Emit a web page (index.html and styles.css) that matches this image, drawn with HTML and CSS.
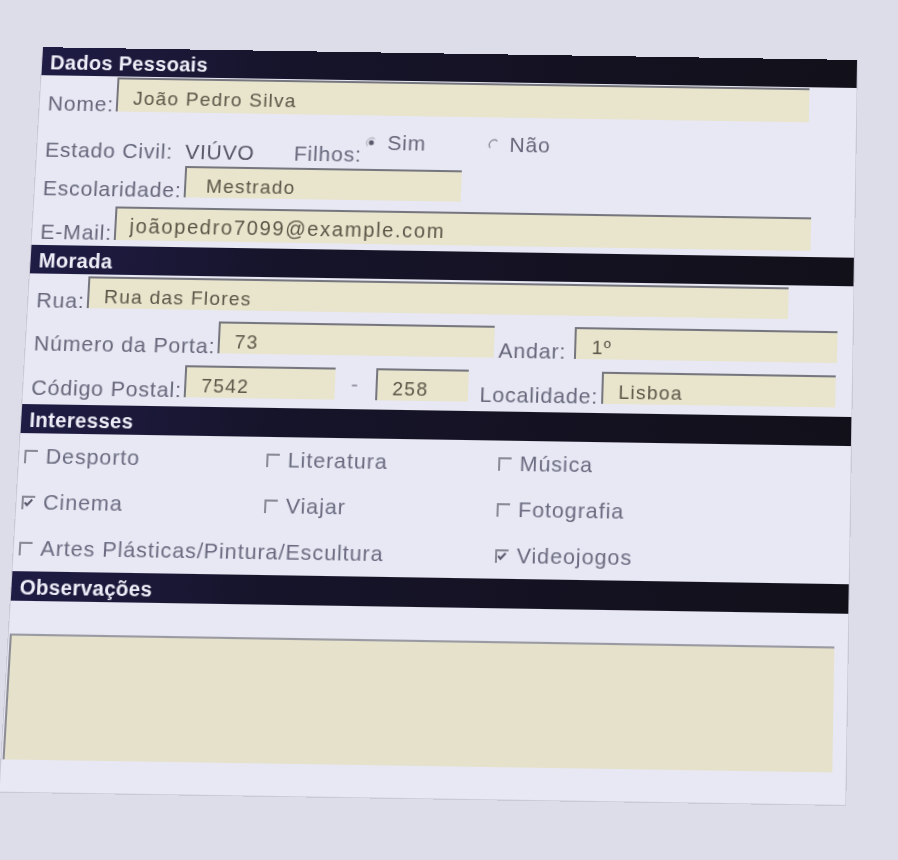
FILE: index.html
```html
<!DOCTYPE html>
<html lang="pt">
<head>
    <meta charset="UTF-8">
    <meta name="viewport" content="width=device-width, initial-scale=1.0">
    <title>Ficha de Inscrição</title>
    <link rel="stylesheet" href="styles.css">
</head>
<body>

<form class="ficha" id="ficha">
    <!-- Dados pessoais -->
    <div class="barra barra-topo"><span>Dados Pessoais</span></div>

    <div class="linha l-nome">
        <label for="nome">Nome:</label>
        <input class="campo c-nome" id="nome" type="text" value="João Pedro Silva">
    </div>

    <div class="linha l-estado">
        <span class="rotulo">Estado Civil:</span>
        <span class="valor">VIÚVO</span>
        <span class="rotulo filhos">Filhos:</span>
        <span class="opcoes">
            <svg class="radio" width="12" height="12" viewBox="0 0 12 12"><path d="M9.4 2.4A5 5 0 0 0 2.4 9.4" fill="none" stroke="#b4b4c0" stroke-width="1.2"/><circle cx="6" cy="6" r="2.5" fill="#5a5a6c"/></svg>
            <span class="op-sim">Sim</span>
            <svg class="radio" width="12" height="12" viewBox="0 0 12 12"><path d="M9.4 2.4A5 5 0 0 0 2.4 9.4" fill="none" stroke="#8c8c99" stroke-width="1.3"/></svg>
            <span>Não</span>
        </span>
    </div>

    <div class="linha l-escola">
        <label for="escola">Escolaridade:</label>
        <input class="campo c-escola" id="escola" type="text" value="Mestrado">
    </div>

    <div class="linha l-email">
        <label for="email">E-Mail:</label>
        <input class="campo c-email" id="email" type="text" value="joãopedro7099@example.com">
    </div>

    <!-- Morada -->
    <div class="barra barra-morada"><span>Morada</span></div>

    <div class="linha l-rua">
        <label for="rua">Rua:</label>
        <input class="campo c-rua" id="rua" type="text" value="Rua das Flores">
    </div>

    <div class="linha l-porta">
        <label for="porta">Número da Porta:</label>
        <input class="campo c-porta" id="porta" type="text" value="73">
        <label class="andar" for="andar">Andar:</label>
        <input class="campo c-andar" id="andar" type="text" value="1º">
    </div>

    <div class="linha l-postal">
        <label for="cp1">Código Postal:</label>
        <input class="campo c-cp1" id="cp1" type="text" value="7542">
        <span class="traco">-</span>
        <input class="campo c-cp2" id="cp2" type="text" value="258">
        <label class="localidade" for="local">Localidade:</label>
        <input class="campo c-local" id="local" type="text" value="Lisboa">
    </div>

    <!-- Interesses -->
    <div class="barra barra-interesses"><span>Interesses</span></div>

    <div class="interesses">
        <div class="item"><span class="caixa"></span>Desporto</div>
        <div class="item"><span class="caixa"></span>Literatura</div>
        <div class="item"><span class="caixa"></span>Música</div>
        <div class="item"><span class="caixa"><svg viewBox="0 0 13 13" width="13" height="13"><path d="M3 6.4l2.3 2.5L10.2 3.6" fill="none" stroke="#55566a" stroke-width="2"/></svg></span>Cinema</div>
        <div class="item"><span class="caixa"></span>Viajar</div>
        <div class="item"><span class="caixa"></span>Fotografia</div>
        <div class="item largo"><span class="caixa"></span>Artes Plásticas/Pintura/Escultura</div>
        <div class="item"><span class="caixa"><svg viewBox="0 0 13 13" width="13" height="13"><path d="M3 6.4l2.3 2.5L10.2 3.6" fill="none" stroke="#55566a" stroke-width="2"/></svg></span>Videojogos</div>
    </div>

    <!-- Observações -->
    <div class="barra barra-obs"><span>Observações</span></div>
    <textarea class="obs" id="obs"></textarea>
</form>

</body>
</html>
```

FILE: styles.css
```css
body {
    margin: 0;
    height: 860px;
    overflow: hidden;
    background-color: #dcdde8;
    font-family: "Liberation Sans", Arial, sans-serif;
    color: #66677b;
}

/* Painel do formulário, fotografado de lado */
.ficha {
    width: 816px;
    margin: 60px 0 0 42px;
    padding-bottom: 30px;
    box-sizing: border-box;
    background-color: #e7e8f3;
    border: 1px solid #c9cad6;
    border-top: 0;
    transform-origin: 100% 0;
    transform: rotate(0.9deg) perspective(1000px) rotateX(3deg);
}

/* Barras de secção */
.barra {
    height: 28px;
    box-sizing: border-box;
    padding: 2px 0 0 8px;
    background: linear-gradient(to right, #1f1c45, #16142a 30%, #121019);
    color: #eeeef8;
    font-size: 20px;
    font-weight: bold;
    line-height: 26px;
    letter-spacing: 0.3px;
}

.barra-morada { margin-top: 6px; }
.barra-interesses { margin-top: 9px; }

/* Linhas de campos */
.linha {
    display: flex;
    align-items: flex-end;
    padding-left: 8px;
    font-size: 21px;
    letter-spacing: 0.8px;
}

.linha label, .rotulo, .valor {
    line-height: 21px;
    margin-bottom: -3px;
    white-space: nowrap;
}

.l-nome { margin-top: 1px; height: 34px; }
.l-estado { height: 53px; box-sizing: border-box; padding-bottom: 7px; }
.l-escola { height: 31px; }
.l-email { margin-top: 10px; height: 33px; }
.l-rua { margin-top: 2px; height: 31px; }
.l-porta { margin-top: 11px; height: 31px; }
.l-postal { margin-top: 12px; height: 31px; }

.valor {
    margin-left: 12px;
    color: #555667;
}

.filhos { margin-left: 39px; }

.opcoes {
    display: flex;
    align-items: center;
    align-self: flex-start;
    margin-top: 16px;
    line-height: 21px;
}

.radio { margin: 0 10px 0 3px; }
.op-sim { margin-right: 58px; }

.campo {
    height: 31px;
    box-sizing: border-box;
    margin: 0 0 0 2px;
    padding: 6px 0 0 15px;
    border: 0;
    border-top: 2px solid #76767f;
    border-left: 2px solid #76767f;
    background-color: #e9e4cc;
    font-family: "Liberation Sans", Arial, sans-serif;
    font-size: 19px;
    letter-spacing: 1.2px;
    color: #5b5647;
    outline: none;
}

.c-nome { width: 691px; height: 34px; }
.c-escola { width: 275px; padding-left: 20px; }
.c-email { width: 690px; height: 33px; padding-top: 4px; padding-left: 13px; font-size: 20px; letter-spacing: 1.6px; }
.c-rua { width: 692px; }
.c-porta { width: 272px; }
.c-andar { width: 259px; margin-left: 8px; }
.c-cp1 { width: 148px; }
.c-cp2 { width: 91px; }
.c-local { width: 230px; margin-left: 3px; }

.andar { margin-left: 5px; }
.localidade { margin-left: 12px; }

.traco {
    align-self: center;
    margin: 0 14px 0 16px;
    color: #8a8b9c;
}

/* Interesses */
.interesses {
    display: grid;
    grid-template-columns: 237px 227px 1fr;
    padding-left: 5px;
    font-size: 21px;
    letter-spacing: 0.9px;
    line-height: 44px;
    color: #6a6b80;
}

.item { white-space: nowrap; }
.item.largo { grid-column: 1 / 3; }

.caixa {
    display: inline-block;
    width: 13px;
    height: 13px;
    box-sizing: border-box;
    margin-right: 8px;
    border-top: 2px solid #8a8a96;
    border-left: 2px solid #8a8a96;
    vertical-align: baseline;
}

.caixa svg {
    display: block;
    margin: -2px 0 0 -2px;
}

/* Observações */
.obs {
    display: block;
    width: 800px;
    height: 118px;
    margin: 31px 0 0 1px;
    box-sizing: border-box;
    border: 0;
    border-top: 2px solid #9a9aa3;
    border-left: 2px solid #8c8c95;
    background-color: #e6e1ca;
    resize: none;
    outline: none;
}
```
